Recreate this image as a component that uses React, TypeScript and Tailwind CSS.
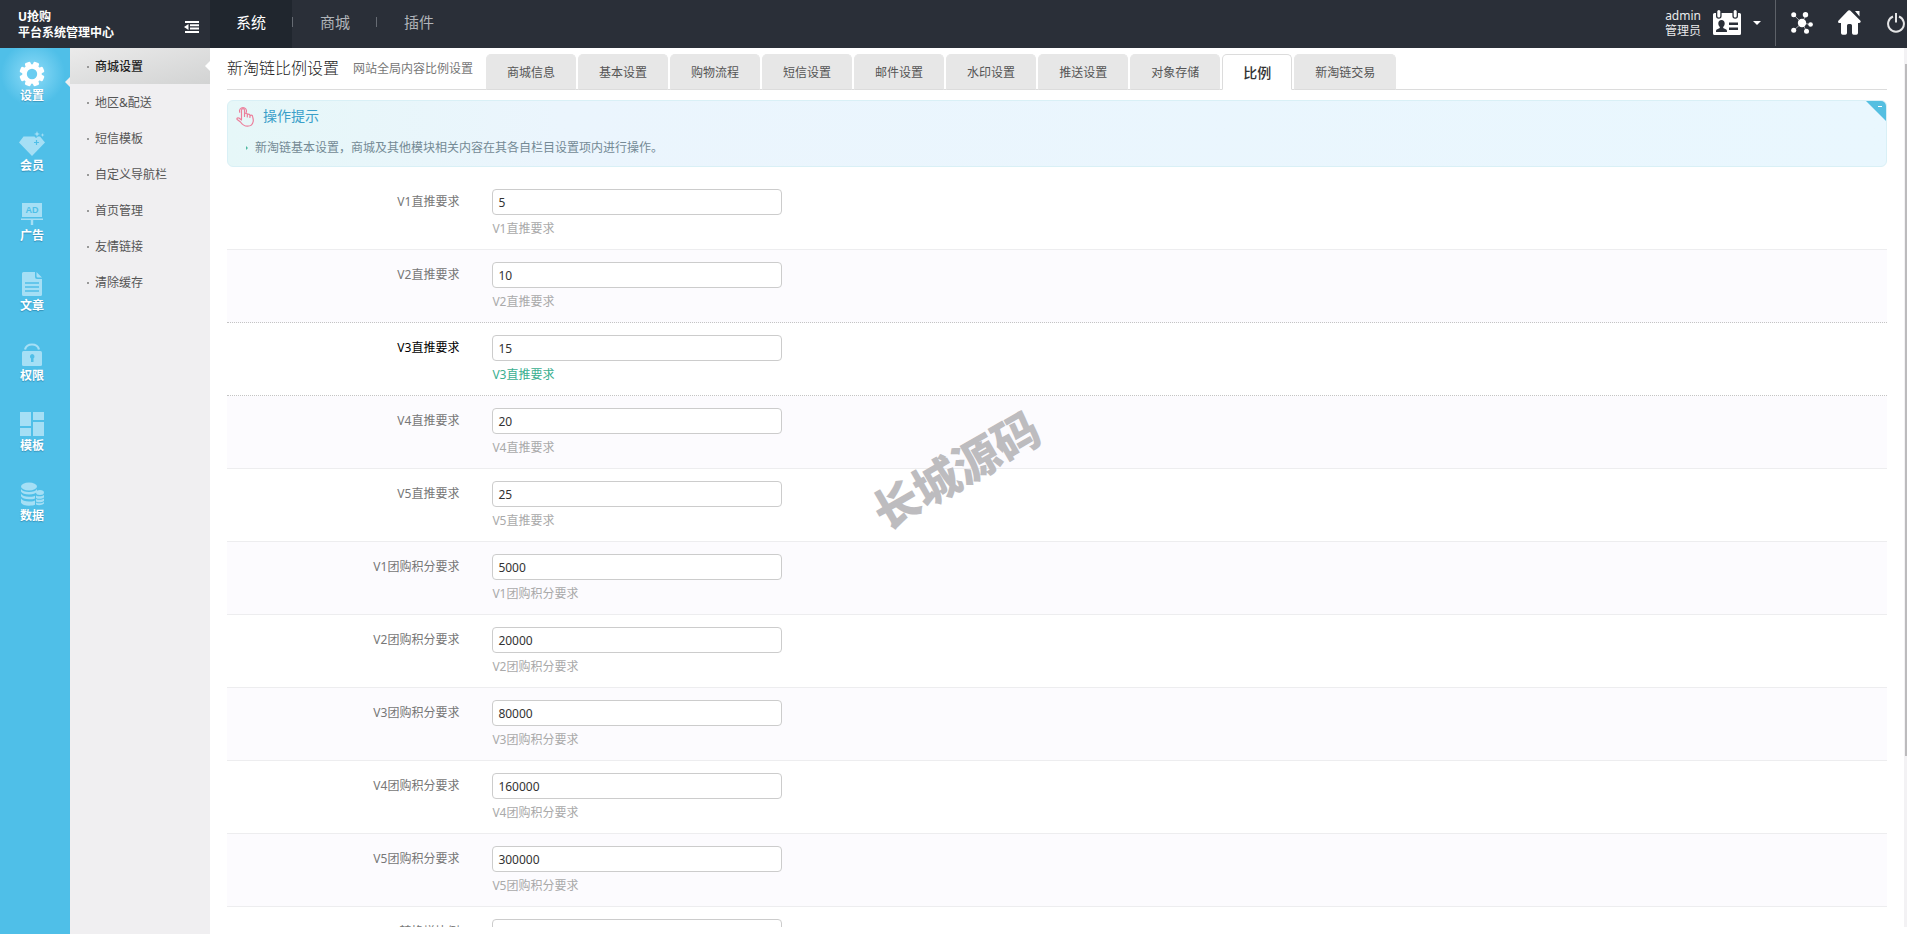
import { useState, type ReactNode } from "react";

const sections = ["系统", "商城", "插件"];

const modules: { name: string; icon: ReactNode }[] = [
  { name: "设置", icon: <GearIcon /> },
  { name: "会员", icon: <DiamondIcon /> },
  { name: "广告", icon: <BoardIcon /> },
  { name: "文章", icon: <ArticleIcon /> },
  { name: "权限", icon: <LockIcon /> },
  { name: "模板", icon: <TemplateIcon /> },
  { name: "数据", icon: <DatabaseIcon /> },
];

const menu = ["商城设置", "地区&配送", "短信模板", "自定义导航栏", "首页管理", "友情链接", "清除缓存"];

const tabs = [
  "商城信息",
  "基本设置",
  "购物流程",
  "短信设置",
  "邮件设置",
  "水印设置",
  "推送设置",
  "对象存储",
  "比例",
  "新淘链交易",
];

const fields = [
  { id: "v1_direct", label: "V1直推要求", value: "5" },
  { id: "v2_direct", label: "V2直推要求", value: "10" },
  { id: "v3_direct", label: "V3直推要求", value: "15" },
  { id: "v4_direct", label: "V4直推要求", value: "20" },
  { id: "v5_direct", label: "V5直推要求", value: "25" },
  { id: "v1_group", label: "V1团购积分要求", value: "5000" },
  { id: "v2_group", label: "V2团购积分要求", value: "20000" },
  { id: "v3_group", label: "V3团购积分要求", value: "80000" },
  { id: "v4_group", label: "V4团购积分要求", value: "160000" },
  { id: "v5_group", label: "V5团购积分要求", value: "300000" },
  { id: "transfer", label: "转换增比例", value: "" },
];

export default function App() {
  return (
    <div className="flex h-screen flex-col overflow-hidden bg-white font-['Noto_Sans','Noto_Sans_CJK_SC',sans-serif] text-xs text-[#333]">
      <Header />
      <div className="flex min-h-0 flex-1">
        <ModuleNav />
        <SideMenu />
        <main className="relative mb-[7px] flex min-w-0 flex-1 overflow-hidden">
          <div className="min-w-0 flex-1 px-[17px]">
            <PageTitle />
            <Tips />
            <SettingsForm />
          </div>
          <div className="w-[3px] shrink-0 bg-[#f3f2f4] pt-4">
            <div className="ml-px h-[692px] bg-[#bcbbbd]" />
          </div>
          <div className="pointer-events-none absolute top-[397px] left-[654px] -rotate-[30deg] text-[46px] leading-[50px] font-black whitespace-nowrap text-[#bdbcbf]">
            长城源码
          </div>
        </main>
      </div>
    </div>
  );
}

function Header() {
  const [active, setActive] = useState("系统");

  return (
    <header className="flex h-12 shrink-0 bg-[#2a2f38] text-white">
      <div className="flex w-[210px] shrink-0 items-center justify-between pt-[2px] pr-[11px] pl-[18px]">
        <p className="text-xs leading-4 font-bold">
          U抢购
          <br />
          平台系统管理中心
        </p>
        <button aria-label="收起菜单" className="mt-1">
          <FoldIcon />
        </button>
      </div>
      <nav className="flex items-center">
        {sections.map((name, i) => (
          <div key={name} className="flex h-full items-center">
            {i > 0 && <span className="mr-px mb-1 h-[10px] w-px bg-[#666b73]" />}
            <button
              onClick={() => setActive(name)}
              className={
                "h-full px-[26px] pb-[5px] text-[15px] " +
                (active === name ? "bg-[#20262e] text-white" : "text-[#b0b4b9]")
              }
            >
              {name}
            </button>
          </div>
        ))}
      </nav>
      <div className="ml-auto flex items-center pb-[3px]">
        <p className="mr-3 text-right text-xs leading-[15px] text-[#e9eaeb]">
          admin
          <br />
          管理员
        </p>
        <button aria-label="账户" className="mr-[14px] flex items-center gap-3">
          <BadgeIcon />
          <span className="border-x-4 border-t-4 border-x-transparent border-t-white" />
        </button>
        <span className="h-[46px] w-px self-start bg-[#5d6168]" />
        <button aria-label="网站地图" className="ml-[15px]">
          <NodesIcon />
        </button>
        <button aria-label="首页" className="ml-[25px]">
          <HomeIcon />
        </button>
        <button aria-label="退出" className="ml-[26px]">
          <PowerIcon />
        </button>
      </div>
    </header>
  );
}

function ModuleNav() {
  return (
    <nav className="w-[70px] shrink-0 bg-[#4fbfe8]">
      {modules.map((m, i) => (
        <a
          key={m.name}
          href="#"
          className={
            "relative flex h-[70px] flex-col items-center pt-3 pr-[6px] font-bold text-white " +
            (i === 0 ? "bg-[radial-gradient(circle_at_33px_26px,#8fdcf8_0,#4fbfe8_32px)]" : "")
          }
        >
          {m.icon}
          <span className="leading-4 [text-shadow:0_1px_1px_rgba(0,60,100,0.35)]">{m.name}</span>
          {i === 0 && (
            <span className="absolute top-[29px] right-0 border-y-[5px] border-r-[5px] border-y-transparent border-r-[#eeeeef]" />
          )}
        </a>
      ))}
    </nav>
  );
}

function SideMenu() {
  return (
    <nav className="w-[140px] shrink-0 bg-[#f0eff1]">
      {menu.map((name, i) => (
        <a
          key={name}
          href="#"
          className={
            "relative flex h-9 items-center gap-[6px] pt-[2px] pl-[17px] " +
            (i === 0
              ? "bg-linear-to-br from-[#ebebeb] to-[#d2d3d3] font-medium text-[#222]"
              : "text-[#555]")
          }
        >
          <span className="size-[2px] bg-[#999]" />
          {name}
          {i === 0 && (
            <span className="absolute top-[13px] right-0 border-y-[5px] border-r-[5px] border-y-transparent border-r-white" />
          )}
        </a>
      ))}
    </nav>
  );
}

function PageTitle() {
  const [active, setActive] = useState("比例");

  return (
    <div className="flex h-[42px] items-end border-b border-[#dcdcdc]">
      <h1 className="mr-[14px] self-center pb-[2px] text-base leading-5 font-light whitespace-nowrap text-[#222]">
        新淘链比例设置
      </h1>
      <span className="mr-[13px] self-center whitespace-nowrap text-[#777]">
        网站全局内容比例设置
      </span>
      <div role="tablist" className="-mb-px flex gap-[2px]">
        {tabs.map((name) => (
          <button
            key={name}
            role="tab"
            aria-selected={active === name}
            onClick={() => setActive(name)}
            className={
              "h-9 rounded-t-[5px] border px-5 pt-[2px] whitespace-nowrap " +
              (active === name
                ? "border-[#dcdcdc] border-b-white bg-white text-sm font-medium text-[#333]"
                : "border-[#e7e7e7] border-b-[#dcdcdc] bg-[#e7e7e7] text-[#555]")
            }
          >
            {name}
          </button>
        ))}
      </div>
    </div>
  );
}

function Tips() {
  return (
    <section className="relative mt-[10px] h-[67px] overflow-hidden rounded-md border border-[#d9f0f6] bg-linear-to-r from-[#e6f7f8] via-[#ebf5fd] via-20% to-[#e9f7fe] px-2">
      <div className="flex h-[30px] items-center gap-2">
        <TouchIcon />
        <h2 className="text-sm text-[#3a9fc9]">操作提示</h2>
      </div>
      <p className="mt-2 ml-[10px] flex items-center gap-[7px] leading-[18px] text-[#748a95]">
        <span className="border-y-2 border-l-2 border-y-transparent border-l-[#4fb9a0]" />
        新淘链基本设置，商城及其他模块相关内容在其各自栏目设置项内进行操作。
      </p>
      <button
        aria-label="收起提示"
        className="absolute top-0 right-0 size-5 bg-[#54bfe1] [clip-path:polygon(0_0,100%_0,100%_100%)]"
      >
        <span className="absolute top-[5px] right-1 h-px w-1 bg-white" />
      </button>
    </section>
  );
}

function SettingsForm() {
  return (
    <form className="mt-[10px]">
      {fields.map((field) => {
        const hovered = field.id === "v3_direct";
        return (
          <div
            key={field.id}
            className={
              "flex h-[73px] border-b pt-3 " +
              (hovered
                ? "border-dotted border-[#c4c4c4]"
                : "border-[#ededef] even:bg-[#fcfbfe]") +
              (field.id === "v2_direct" ? " border-dotted border-b-[#c4c4c4]" : "")
            }
          >
            <label
              htmlFor={field.id}
              className={
                "w-[14%] shrink-0 text-right leading-[26px] " +
                (hovered ? "text-black" : "text-[#777]")
              }
            >
              {field.label}
            </label>
            <div className="ml-[33px]">
              <input
                id={field.id}
                defaultValue={field.value}
                className="block h-[26px] w-[290px] rounded-[4px] border border-[#ccc] bg-white px-[5px] text-[#333] outline-none"
              />
              <p
                className={"mt-[5px] leading-[18px] " + (hovered ? "text-[#3aaf90]" : "text-[#aaa]")}
              >
                {field.label}
              </p>
            </div>
          </div>
        );
      })}
    </form>
  );
}

function FoldIcon() {
  return (
    <svg width="15" height="12" viewBox="0 0 15 12" fill="#fff">
      <path d="M1 0h14v2H1zM6 3.3h9v2H6zM6 6.6h9v2H6zM1 10h14v2H1zM4.500 3v6L0 6z" />
    </svg>
  );
}

function BadgeIcon() {
  return (
    <svg width="28" height="26" viewBox="0 0 28 26">
      <path
        fill="#fff"
        d="M1.500 3H3v3a2.800 2.800 0 0 0 5.600 0V3h10.800v3a2.800 2.800 0 0 0 5.600 0V3h1.500A1.500 1.500 0 0 1 28 4.500v19a1.500 1.500 0 0 1-1.500 1.500h-25A1.500 1.500 0 0 1 0 23.500v-19A1.500 1.500 0 0 1 1.500 3z"
      />
      <rect x="4.300" y="0" width="3" height="7.500" rx="1.500" fill="#fff" />
      <rect x="20.700" y="0" width="3" height="7.500" rx="1.500" fill="#fff" />
      <path
        fill="#2a2f38"
        d="M8.500 10c2 0 3.200 1.500 3.200 3.500 0 1.500-.7 2.700-1.500 3.400v1.200l3 1.400c.6.300.8.900.8 2.500H3c0-1.600.2-2.200.8-2.500l3-1.400v-1.200c-.8-.7-1.500-1.900-1.500-3.400 0-2 1.200-3.500 3.200-3.500zM16 12.500h9V15h-9zM16 17.500h9V20h-9z"
      />
    </svg>
  );
}

function NodesIcon() {
  return (
    <svg width="22" height="22" viewBox="0 0 22 22" fill="#fff">
      <path
        stroke="#fff"
        strokeWidth="0.600"
        d="M11 11 2.500 2.700M11 11 15 2.700M11 11 2.500 18.500M11 11l4.500 8M11 11l8.500 1.500"
      />
      <circle cx="11" cy="11" r="4.200" />
      <circle cx="2.700" cy="2.800" r="2.500" />
      <circle cx="14.500" cy="2.800" r="2.700" />
      <circle cx="2.700" cy="18.300" r="2.500" />
      <circle cx="15.500" cy="19.300" r="2.500" />
      <circle cx="19.600" cy="12.500" r="2.300" />
    </svg>
  );
}

function HomeIcon() {
  return (
    <svg width="23" height="25" viewBox="0 0 23 25" fill="#fff">
      <path d="M11.200.3a2 2 0 0 1 1.500.6l9.500 9.600c1 1 .4 2.500-1 2.500H20v10a1.700 1.700 0 0 1-1.700 1.700h-2.600A1.700 1.700 0 0 1 14 23v-7.500a1.500 1.500 0 0 0-1.500-1.500h-2A1.500 1.500 0 0 0 9 15.500V23a1.700 1.700 0 0 1-1.700 1.700H4.700A1.700 1.700 0 0 1 3 23V13H1.500C.1 13-.4 11.500.6 10.500l9.100-9.600a2 2 0 0 1 1.500-.6zM17 1h4.500v5.500z" />
    </svg>
  );
}

function PowerIcon() {
  return (
    <svg width="20" height="20" viewBox="0 0 20 20" fill="none" stroke="#e4e5e6" strokeWidth="2">
      <path d="M6 3.500a7.900 7.900 0 1 0 6 0M9 0v9.500" />
    </svg>
  );
}

function GearIcon() {
  return (
    <svg width="26" height="28" viewBox="0 0 26 28">
      <g transform="translate(13 14)">
        <g fill="#fff">
          <rect x="-3" y="-12.500" width="6" height="25" rx="1.500" transform="rotate(22.500)" />
          <rect x="-3" y="-12.500" width="6" height="25" rx="1.500" transform="rotate(67.500)" />
          <rect x="-3" y="-12.500" width="6" height="25" rx="1.500" transform="rotate(112.500)" />
          <rect x="-3" y="-12.500" width="6" height="25" rx="1.500" transform="rotate(157.500)" />
          <circle r="9.800" />
        </g>
        <circle r="5.200" fill="#6acdf1" />
      </g>
    </svg>
  );
}

function DiamondIcon() {
  return (
    <svg width="28" height="28" viewBox="0 0 28 28">
      <path fill="#a5dff5" d="M5.500 6.500h11l1.500 1.500L20 6.500h2l5 6L14 26 1 12.500z" />
      <path
        fill="#a5dff5"
        d="m19 1 .8 2.200L22 4l-2.200.8L19 7l-.8-2.200L16 4l2.200-.8zM24.500 3l.5 1.500 1.500.5-1.500.5-.5 1.500-.5-1.500-1.500-.5 1.500-.5z"
      />
      <path stroke="#4fbfe8" strokeWidth="1.200" d="M18.500 10v5M16 12.500h5" />
    </svg>
  );
}

function BoardIcon() {
  return (
    <svg width="24" height="28" viewBox="0 0 24 28">
      <path fill="#a5dff5" d="M2 3h20v14H2zM1 18.500h22V20H1zM10.800 20h2.400v5h-2.400z" />
      <text
        x="12"
        y="13"
        textAnchor="middle"
        fontSize="9"
        fontFamily="Liberation Sans"
        fill="#4fbfe8"
      >
        AD
      </text>
    </svg>
  );
}

function ArticleIcon() {
  return (
    <svg width="22" height="28" viewBox="0 0 22 28">
      <path fill="#a5dff5" d="M2.500 2H14v5a2 2 0 0 0 2 2h5v15.500a1.500 1.500 0 0 1-1.500 1.500h-17A1.500 1.500 0 0 1 1 24.500v-21A1.500 1.500 0 0 1 2.500 2zM15.500 2 21 7.500h-4A1.500 1.500 0 0 1 15.500 6z" />
      <path stroke="#4fbfe8" strokeWidth="1.300" d="M4 13h14M4 17h14M4 21h14" />
    </svg>
  );
}

function LockIcon() {
  return (
    <svg width="22" height="28" viewBox="0 0 22 28">
      <path fill="none" stroke="#a5dff5" strokeWidth="2.200" d="M4 9.500a7.200 6.500 0 0 1 14 0" />
      <rect x="1" y="11" width="20" height="15" rx="1.500" fill="#a5dff5" />
      <path fill="#4fbfe8" d="M11 14a2.500 2.500 0 0 1 1.500 4.500v3.500h-2.500v-3.500A2.500 2.500 0 0 1 11 14z" />
    </svg>
  );
}

function TemplateIcon() {
  return (
    <svg width="24" height="28" viewBox="0 0 24 28" fill="#a5dff5">
      <path d="M0 2h11v14H0zM13 2h11v8H13zM0 18h11v8H0zM13 12h11v14H13z" />
    </svg>
  );
}

function DatabaseIcon() {
  return (
    <svg width="24" height="28" viewBox="0 0 24 28" fill="#a5dff5">
      <ellipse cx="9" cy="6.500" rx="8" ry="4" />
      <path d="M1 9c1 2 4 3 8 3s7-1 8-3v2.500c-1 2-4 3-8 3s-7-1-8-3zM1 13.800c1 2 4 3 8 3s4-.2 6-1v2.700c-2 .7-3 .8-6 .8-4 0-7-1-8-3zM1 18.600c1 2 4 3 8 3s4-.2 6-1v4.200c-2 .7-3 .9-6 .9-4 0-7-1-8-3z" />
      <ellipse cx="20" cy="12.500" rx="4" ry="2.500" />
      <path d="M16 15.500c2 1.200 6 1.200 8-.5v2.500c-2 1.700-6 1.700-8 .5zM16 19c2 1.200 6 1.200 8-.5V21c-2 1.700-6 1.700-8 .5zM16 22.500c2 1.200 6 1.200 8-.5v1.500c-2 2-6 2-8 1z" />
    </svg>
  );
}

function TouchIcon() {
  return (
    <svg
      width="19"
      height="21"
      viewBox="0 0 19 21"
      fill="none"
      stroke="#ec7f9b"
      strokeWidth="1.200"
      strokeLinecap="round"
      strokeLinejoin="round"
    >
      <path d="M5.500 13V4.200a1.500 1.500 0 0 1 3 0v6.300M8.500 10V8.500a1.400 1.400 0 0 1 2.800 0V11M11.300 9.500a1.300 1.300 0 0 1 2.600 0v2M14 10.500a1.300 1.300 0 0 1 2.600 0c.3 1.500 1 3 .6 5-.6 3-2.700 4.700-5.700 4.700-4 0-5.500-2-7-4.200L1.200 13.600c-.8-1.300.8-2.300 1.800-1.500L5.500 14" />
      <path d="M3.700 6.200a3.500 3.500 0 1 1 6.600 0" />
    </svg>
  );
}
